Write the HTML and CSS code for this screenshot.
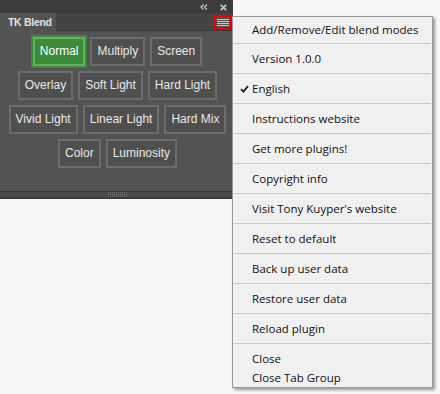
FILE: index.html
```html
<!DOCTYPE html>
<html>
<head>
<meta charset="utf-8">
<link rel="stylesheet" href="styles.css">
</head>
<body>
<div class="panel">
  <div class="topbar">
    <svg class="ico-collapse" width="8" height="6" viewBox="0 0 8 6"><path d="M3.5 0.5 L1 3 L3.5 5.5 M7 0.5 L4.5 3 L7 5.5" fill="none" stroke="#c4c4c4" stroke-width="1.3"/></svg>
    <svg class="ico-close" width="7" height="7" viewBox="0 0 7 7"><path d="M0.8 0.8 L6.2 6.2 M6.2 0.8 L0.8 6.2" fill="none" stroke="#c4c4c4" stroke-width="1.8"/></svg>
  </div>
  <div class="tabrow">
    <div class="tab">TK Blend</div>
    <div class="menu-btn">
      <span></span><span></span><span></span><span></span>
    </div>
  </div>
  <div class="body">
    <div class="row">
      <div class="btn active">Normal</div>
      <div class="btn">Multiply</div>
      <div class="btn">Screen</div>
    </div>
    <div class="row">
      <div class="btn">Overlay</div>
      <div class="btn">Soft Light</div>
      <div class="btn">Hard Light</div>
    </div>
    <div class="row">
      <div class="btn">Vivid Light</div>
      <div class="btn">Linear Light</div>
      <div class="btn">Hard Mix</div>
    </div>
    <div class="row">
      <div class="btn">Color</div>
      <div class="btn">Luminosity</div>
    </div>
  </div>
  <div class="footer"><div class="grip"></div></div>
</div>

<div class="menu">
  <div class="item first">Add/Remove/Edit blend modes</div>
  <div class="sep"></div>
  <div class="item">Version 1.0.0</div>
  <div class="sep"></div>
  <div class="item"><svg class="check" width="9" height="8" viewBox="0 0 9 8"><path d="M1 4.2 L3.4 6.6 L8 1.2" fill="none" stroke="#222" stroke-width="1.9"/></svg>English</div>
  <div class="sep"></div>
  <div class="item">Instructions website</div>
  <div class="sep"></div>
  <div class="item">Get more plugins!</div>
  <div class="sep"></div>
  <div class="item">Copyright info</div>
  <div class="sep"></div>
  <div class="item">Visit Tony Kuyper's website</div>
  <div class="sep"></div>
  <div class="item">Reset to default</div>
  <div class="sep"></div>
  <div class="item">Back up user data</div>
  <div class="sep"></div>
  <div class="item">Restore user data</div>
  <div class="sep"></div>
  <div class="item">Reload plugin</div>
  <div class="sep"></div>
  <div class="group">
    <div class="item small">Close</div>
    <div class="item small">Close Tab Group</div>
  </div>
</div>
</body>
</html>
```

FILE: styles.css
```css
html, body {
  margin: 0;
  padding: 0;
}
body {
  background: #f8f8f8;
  width: 440px;
  height: 394px;
  position: relative;
  overflow: hidden;
  font-family: "Liberation Sans", Arial, sans-serif;
}

.panel {
  width: 233px;
  background: #535353;
}

.topbar {
  height: 13px;
  background: #3c3c3c;
  display: flex;
  align-items: center;
  justify-content: flex-end;
}
.ico-collapse {
  margin-right: 12px;
  margin-top: 1px;
}
.ico-close {
  margin-right: 6px;
  margin-top: 2px;
}

.tabrow {
  height: 18px;
  background: #444444;
  box-shadow: inset 0 -1px 0 #373737;
  display: flex;
  align-items: center;
}
.tab {
  width: 48px;
  height: 18px;
  line-height: 18px;
  padding-left: 8px;
  background: #535353;
  color: #e2e2e2;
  font-size: 10.5px;
  font-weight: bold;
  letter-spacing: -0.3px;
}
.menu-btn {
  margin-left: auto;
  margin-right: 1px;
  width: 12px;
  height: 10px;
  border: 2px solid #ee0000;
  padding: 0 1px;
  display: flex;
  flex-direction: column;
  justify-content: center;
  gap: 1px;
  background: #505050;
}
.menu-btn span {
  display: block;
  height: 1px;
  background: #c8c8c8;
}

.body {
  height: 154px;
  padding: 6px 0 0 2px;
  display: flex;
  flex-direction: column;
  gap: 5px;
}
.row {
  display: flex;
  justify-content: center;
  gap: 5px;
}
.btn {
  height: 25px;
  line-height: 25px;
  padding: 0 5px;
  border: 2px solid #6d6d6d;
  background: #4f4f4f;
  color: #e9e9e9;
  font-size: 12px;
  white-space: nowrap;
}
.btn.active {
  background: #3b8b3b;
  border-color: #62b062;
  outline: 2px solid #3b8b3b;
  color: #ffffff;
}

.footer {
  height: 5px;
  background: #4b4b4b;
  border-top: 1px solid #383838;
  border-bottom: 2px solid #3d3d3d;
  display: flex;
  justify-content: center;
  padding-left: 2px;
}
.grip {
  width: 20px;
  height: 5px;
  background: repeating-linear-gradient(90deg, #666 0 1px, transparent 1px 2px);
}

.menu {
  position: absolute;
  left: 232px;
  top: 16px;
  width: 199px;
  background: #f0f0f0;
  border: 1px solid #979797;
  box-shadow: 2px 2px 3px rgba(0, 0, 0, 0.4);
  font-family: "Open Sans", "Noto Sans", sans-serif;
  font-size: 11.5px;
  color: #111;
}
.item {
  position: relative;
  height: 29px;
  line-height: 29px;
  padding-left: 19px;
  white-space: nowrap;
}
.item.first {
  height: 26px;
  line-height: 26px;
}
.sep {
  height: 1px;
  margin: 0 1px;
  background: #c6c6c6;
}
.group {
  padding-top: 5px;
}
.item.small {
  height: 19px;
  line-height: 19px;
}
.check {
  position: absolute;
  left: 7px;
  top: 11px;
}
```
